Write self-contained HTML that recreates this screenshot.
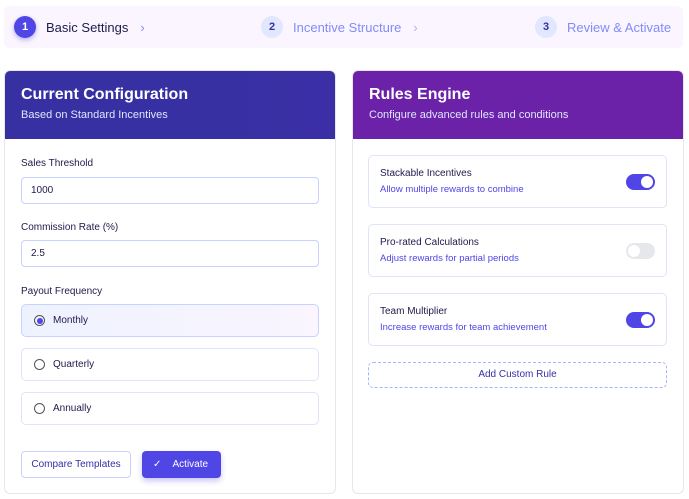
<!DOCTYPE html>
<html><head><style>
*{box-sizing:border-box;margin:0;padding:0}
body{width:689px;height:499px;background:#fff;font-family:"Liberation Sans",sans-serif;position:relative;overflow:hidden;color:#1e1b4b}
.abs{position:absolute}
.step{position:absolute;top:0;height:42px;display:flex;align-items:center;font-size:13px}
.num{width:22px;height:22px;border-radius:50%;display:flex;align-items:center;justify-content:center;font-size:11px;font-weight:bold;margin-right:10px}
.card{position:absolute;top:70px;width:332px;height:424px;border:1px solid #e5e7eb;border-radius:6px;overflow:hidden;background:#fff}
.hd{height:68px;padding:15px 16px;color:#fff}
.hd h2{font-size:16px;font-weight:bold;margin-bottom:5px}
.hd p{font-size:11px;color:#e0e7ff}
.lbl{position:absolute;left:16px;font-size:10px;color:#1e1b4b}
.inp{position:absolute;left:16px;width:298px;height:27px;border:1px solid #c7d2fe;border-radius:4px;font-size:10px;padding:0 9px;line-height:25px}
.opt{position:absolute;left:16px;width:298px;height:33px;border:1px solid #dfe3fb;border-radius:5px;font-size:10px;display:flex;align-items:center;padding-left:12px}
.rad{width:11px;height:11px;border:1.3px solid #555;border-radius:50%;margin-right:8px;display:flex;align-items:center;justify-content:center}
.rule{position:absolute;left:15px;width:299px;height:53px;border:1px solid #dfe3fb;border-radius:5px;padding:12px 11px}
.rule b{display:block;font-size:10px;font-weight:normal;color:#1e1b4b;line-height:12px}
.rule span{display:block;margin-top:4px;line-height:12px;font-size:9.5px;color:#4f46e5}
.tg{position:absolute;right:11px;top:18px;width:29px;height:16px;border-radius:8px;background:#4f46e5}
.tg i{position:absolute;top:2px;right:2px;width:12px;height:12px;border-radius:50%;background:#fff}
.tg.off{background:#e5e7eb}.tg.off i{right:auto;left:2px}
</style></head><body>
<div class="abs" style="left:4px;top:6px;width:679px;height:42px;background:#faf5fe;border-radius:6px">
 <div class="step" style="left:10px"><div class="num" style="background:#4f46e5;color:#fff;box-shadow:0 2px 5px rgba(79,70,229,.4)">1</div><span style="color:#1e1b4b">Basic Settings</span><span style="color:#818cf8;margin-left:12px">›</span></div>
 <div class="step" style="left:257px"><div class="num" style="background:#e0e7ff;color:#3730a3">2</div><span style="color:#818cf8">Incentive Structure</span><span style="color:#a5b4fc;margin-left:12px">›</span></div>
 <div class="step" style="left:531px"><div class="num" style="background:#e0e7ff;color:#3730a3">3</div><span style="color:#818cf8">Review &amp; Activate</span></div>
</div>
<div class="card" style="left:4px">
 <div class="hd" style="background:linear-gradient(90deg,#3730a3,#3730a3 70%,#3b2fa6)"><h2>Current Configuration</h2><p>Based on Standard Incentives</p></div>
 <div class="lbl" style="top:87px">Sales Threshold</div>
 <div class="inp" style="top:106px">1000</div>
 <div class="lbl" style="top:151px">Commission Rate (%)</div>
 <div class="inp" style="top:169px">2.5</div>
 <div class="lbl" style="top:215px">Payout Frequency</div>
 <div class="opt" style="top:233px;background:linear-gradient(90deg,#eef2ff,#faf5ff);border-color:#c7d2fe"><div class="rad"><div style="width:6px;height:6px;border-radius:50%;background:#4f46e5"></div></div>Monthly</div>
 <div class="opt" style="top:277px"><div class="rad"></div>Quarterly</div>
 <div class="opt" style="top:321px"><div class="rad"></div>Annually</div>
 <div class="abs" style="left:16px;top:380px;width:110px;height:27px;border:1px solid #c7d2fe;border-radius:4px;font-size:10px;color:#3730a3;text-align:center;line-height:25px">Compare Templates</div>
 <div class="abs" style="left:137px;top:380px;width:79px;height:27px;background:#4f46e5;border-radius:4px;font-size:10px;color:#fff;line-height:27px;padding-left:11px;box-shadow:0 3px 6px rgba(79,70,229,.3)">✓&nbsp;&nbsp;&nbsp;&nbsp;Activate</div>
</div>
<div class="card" style="left:352px">
 <div class="hd" style="background:#6b21a8"><h2>Rules Engine</h2><p>Configure advanced rules and conditions</p></div>
 <div class="rule" style="top:84px"><b>Stackable Incentives</b><span>Allow multiple rewards to combine</span><div class="tg"><i></i></div></div>
 <div class="rule" style="top:153px"><b>Pro-rated Calculations</b><span>Adjust rewards for partial periods</span><div class="tg off"><i></i></div></div>
 <div class="rule" style="top:222px"><b>Team Multiplier</b><span>Increase rewards for team achievement</span><div class="tg"><i></i></div></div>
 <div class="abs" style="left:15px;top:291px;width:299px;height:26px;border:1.3px dashed #a5b4fc;border-radius:5px;font-size:10px;color:#3730a3;text-align:center;line-height:24px">Add Custom Rule</div>
</div>
</body></html>
